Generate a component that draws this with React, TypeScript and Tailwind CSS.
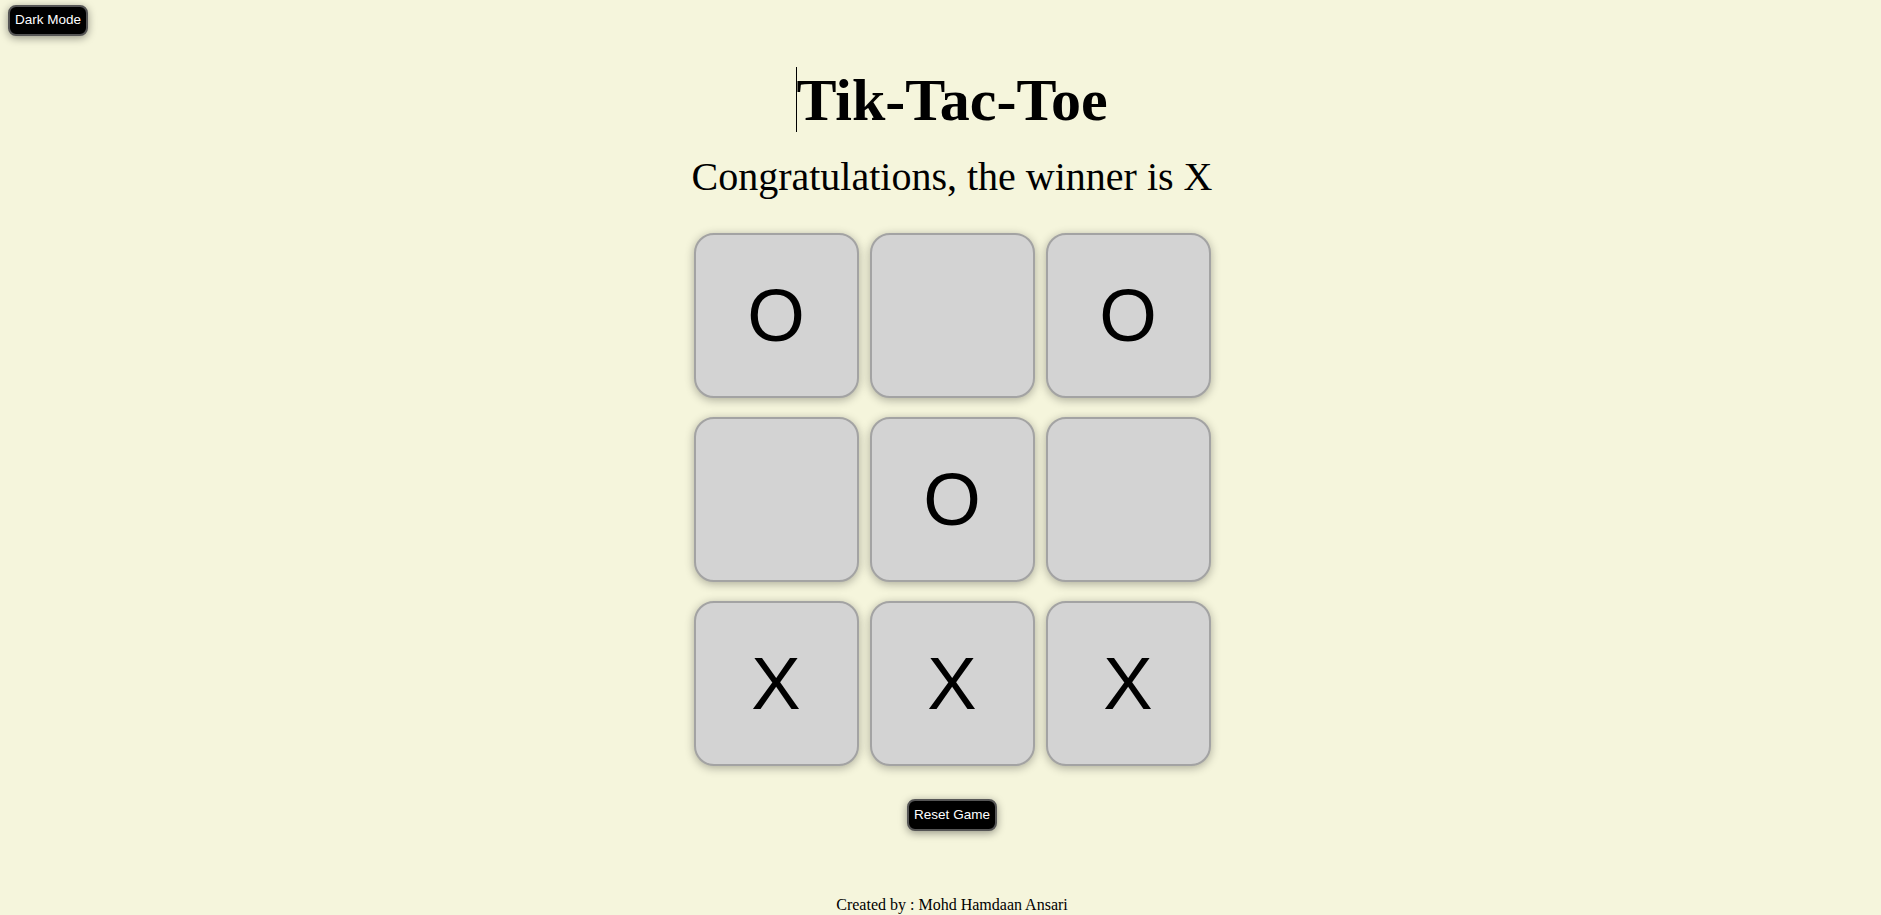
import React from "react";

const board: string[] = ["O", "", "O", "", "O", "", "X", "X", "X"];

function Cell({ value }: { value: string }) {
    return (
        <button className="w-[165px] h-[165px] flex items-center justify-center rounded-[20px] border-2 border-[#a3a3a3] bg-[#d3d3d3] shadow-[0_2px_10px_rgba(0,0,0,0.3)] text-[74px] leading-none text-black font-['Liberation_Sans',Arial,sans-serif]">
            {value}
        </button>
    );
}

export default function App() {
    return (
        <div className="relative min-h-[915px] bg-[#f5f5dc] font-['Liberation_Serif','Times_New_Roman',serif] text-black">
            <button className="absolute left-[8px] top-[5px] w-[80px] h-[31px] rounded-lg border-2 border-[#555] bg-black text-white text-[13.5px] font-['Liberation_Sans',Arial,sans-serif] shadow-[0_2px_8px_rgba(0,0,0,0.4)]">
                Dark Mode
            </button>

            <div className="flex flex-col items-center pl-[23px] pt-[63px]">
                <div className="relative">
                    <span className="absolute left-0 top-[4px] w-px h-[65px] bg-black" />
                    <h1 className="text-[60px] font-bold leading-[74px]">Tik-Tac-Toe</h1>
                </div>

                <p className="mt-[17px] text-[40px] leading-[46px]">Congratulations, the winner is X</p>

                <div className="mt-[33px] grid grid-cols-[165px_165px_165px] gap-x-[11px] gap-y-[19px]">
                    {board.map((v, i) => (
                        <Cell key={i} value={v} />
                    ))}
                </div>

                <button className="mt-[33px] w-[90px] h-[32px] rounded-lg border-2 border-[#555] bg-black text-white text-[13.5px] font-['Liberation_Sans',Arial,sans-serif] shadow-[0_2px_8px_rgba(0,0,0,0.4)]">
                    Reset Game
                </button>

                <footer className="mt-[65px] text-[16px] leading-[18px]">Created by : Mohd Hamdaan Ansari</footer>
            </div>
        </div>
    );
}
